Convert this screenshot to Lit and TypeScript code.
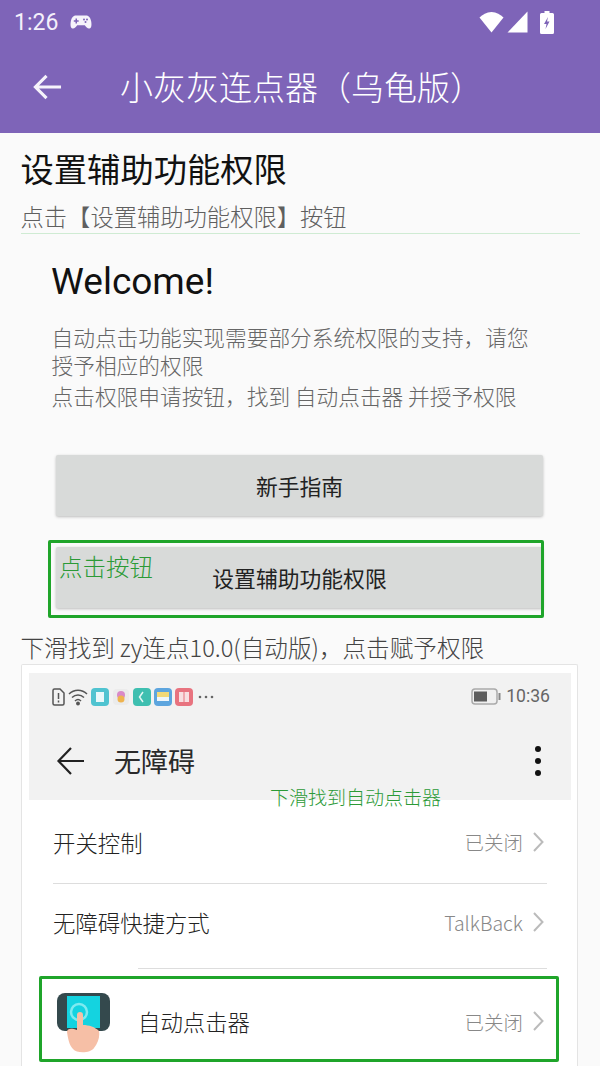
import { LitElement, html, css } from "lit";
import { customElement } from "lit/decorators.js";

@customElement("app-root")
export class AppRoot extends LitElement {
  static styles = css`
    :host { display: block; width: 600px; height: 1066px; overflow: hidden; background: #fafafa;
      font-family: "Noto Sans CJK SC", "Noto Sans", sans-serif; color: #222; }
    * { box-sizing: border-box; }
    .appbar { height: 133px; background: #7e64b8; color: #fff; display: flex; flex-direction: column; }
    .status { height: 44px; display: flex; align-items: center; padding: 0 46px 0 14px; }
    .time { font: 400 23px/1 Roboto, sans-serif; color: #f4f0fb; margin-right: 12px; }
    .spacer { flex: 1; }
    .status svg { display: block; }
    .status .sig { margin: 0 12px 0 3px; }
    .toolbar { height: 89px; display: flex; align-items: center; padding: 0 0 4px 33px; }
    .title { margin-left: 58px; font-size: 33px; font-weight: 300; line-height: 1; color: #fff; white-space: nowrap; }
    .h1 { margin: 14px 0 0 20.500px; font-size: 33.300px; line-height: 42px; font-weight: 400; color: #111; }
    .sub { margin: 11px 20px 0 20.500px; font-size: 23.300px; line-height: 32px; font-weight: 300; color: #5f5f5f;
      height: 34px; border-bottom: 1px solid #cfebd3; white-space: nowrap; }
    .welcome { margin: 24px 0 0 51px; font: 400 37px/48px Roboto, sans-serif; color: #111; }
    .para { margin: 16.500px 60px 0 51.500px; font-size: 21.700px; font-weight: 300; color: #666; line-height: 28px; }
    .para span { display: block; white-space: nowrap; }
    .para .gap { margin-top: 3px; }
    .btn { width: 487px; height: 61px; margin-left: 56px; background: #d8dad9; border-radius: 2px;
      box-shadow: 0 1px 3px rgba(0,0,0,.25); display: flex; align-items: center; justify-content: center;
      font-size: 21.800px; color: #222; font-weight: 400; }
    .first { margin-top: 45.500px; }
    .second { margin-top: 31px; position: relative; }
    .frame { position: absolute; border: 3px solid #1fa52a; border-radius: 2px; pointer-events: none; }
    .second .frame { left: -8px; top: -7px; width: 496px; height: 78px; }
    .note { position: absolute; color: #2b9a36; font-weight: 300; white-space: nowrap; line-height: 1; }
    .second .note { left: 3px; top: 8px; font-size: 23.500px; }
    .scroll { margin: 23px 0 0 20.500px; font-size: 23.600px; line-height: 32px; font-weight: 300; color: #444; white-space: nowrap; }
    .shot { position: relative; margin: 1px 22px 0 21px; height: 410px; background: #fff; border: 1px solid #e4e4e4;
      border-bottom: 0; border-radius: 2px 2px 0 0; padding: 8px 6px 0 7px; }
    .band { height: 127px; background: #f2f2f2; display: flex; flex-direction: column; }
    .band-status { height: 48px; display: flex; align-items: center; padding: 0 21px 0 23px; gap: 3px; }
    .more { margin-left: 2px; }
    .clock { font: 400 17.600px/1 Roboto, sans-serif; color: #666; margin-left: 2px; }
    .band-bar { flex: 1; display: flex; align-items: center; padding: 0 30px 0 27px; }
    .band-title { margin-left: 28px; font-size: 27px; font-weight: 400; color: #2a2a2a; line-height: 1; }
    .band .note { left: 248px; top: 122px; font-size: 19px; }
    .dots { display: flex; flex-direction: column; gap: 6px; }
    .dots i { width: 6px; height: 6px; border-radius: 50%; background: #111; display: block; }
    .row { display: flex; align-items: center; justify-content: space-between; margin: 0 24px;
      font-size: 22.400px; font-weight: 300; color: #222; border-bottom: 1px solid #ddd; }
    .r1 { height: 84px; }
    .r2 { height: 85px; border-bottom: 0; position: relative; padding-bottom: 9px; }
    .r2::after { content: ""; position: absolute; left: 85px; right: 0; bottom: 0; height: 1px; background: #ddd; }
    .val { display: flex; align-items: center; gap: 9px; font-size: 19.500px; color: #888; font-weight: 300; padding-right: 3px; }
    .r3 { height: 92px; border: 0; margin-top: 8px; padding: 0 0 4px 85px; position: relative; }
    .shot .frame { left: 17px; top: 311px; width: 520px; height: 86px; }
    .app-icon { position: absolute; left: 3px; top: 15px; }
  `;

  chevron() {
    return html`<svg width="12" height="20" viewBox="0 0 12 20" fill="none" stroke="#bbb" stroke-width="2"><path d="M2 1l8.500 9-8.500 9"/></svg>`;
  }

  render() {
    return html`
      <header class="appbar">
        <div class="status">
          <span class="time">1:26</span>
          <svg width="22" height="16" viewBox="0 0 22 16"><path fill="#f6f3fb" d="M6 1.500h10c3 0 4.500 2.500 5.200 6 .6 3.500.3 6.500-1.700 7-1.800.4-3.300-1.300-4.700-3.300H7.200C5.800 13.200 4.300 14.900 2.500 14.500.500 14 .2 11 .8 7.500 1.500 4 3 1.500 6 1.500z"/><path fill="#7e64b8" d="M5.500 4.500h1.500v1.700h1.700v1.500H7v1.700H5.500V7.700H3.800V6.200h1.700z"/><circle cx="14" cy="5.500" r="1" fill="#7e64b8"/><circle cx="17" cy="5.500" r="1" fill="#7e64b8"/><circle cx="15.500" cy="8" r="1" fill="#7e64b8"/></svg>
          <span class="spacer"></span>
          <svg width="25" height="22" viewBox="0 0 25 22"><path fill="#fff" d="M12.500 21.500L.5 6.500C3.500 3.500 7.500 1 12.500 1s9 2.500 12 5.500z"/></svg>
          <svg class="sig" width="21" height="22" viewBox="0 0 21 22"><path fill="#fff" d="M.5 21.500L20.500.5v21z"/></svg>
          <svg width="14" height="23" viewBox="0 0 14 23"><path fill="#fff" d="M4.500 0h5v2h3a1.500 1.500 0 0 1 1.500 1.500v18a1.500 1.500 0 0 1-1.500 1.500h-11A1.500 1.500 0 0 1 0 21.500v-18A1.500 1.500 0 0 1 1.500 2h3z"/><path fill="#7e64b8" d="M8 6L4 13h2.500L5.500 18l4-7.500H7z"/></svg>
        </div>
        <div class="toolbar">
          <svg width="29" height="28" viewBox="0 0 30 28" fill="none" stroke="#f6f3fb" stroke-width="3.200"><path d="M29 14H3M14 2.500L2.500 14 14 25.500"/></svg>
          <div class="title">小灰灰连点器（乌龟版）</div>
        </div>
      </header>
      <div class="h1">设置辅助功能权限</div>
      <div class="sub">点击【设置辅助功能权限】按钮</div>
      <div class="welcome">Welcome!</div>
      <div class="para"><span>自动点击功能实现需要部分系统权限的支持，请您</span><span>授予相应的权限</span><span class="gap">点击权限申请按钮，找到 自动点击器 并授予权限</span></div>
      <div class="btn first">新手指南</div>
      <div class="btn second">
        设置辅助功能权限
        <span class="frame"></span>
        <span class="note">点击按钮</span>
      </div>
      <div class="scroll">下滑找到 zy连点10.0(自动版)，点击赋予权限</div>
      <div class="shot">
        <div class="band">
          <div class="band-status">
            <svg width="13" height="18" viewBox="0 0 13 18" fill="none" stroke="#555" stroke-width="1.500"><path d="M1 2.500A1.500 1.500 0 0 1 2.500 1H8l4 4v10.500a1.500 1.500 0 0 1-1.500 1.500h-8A1.500 1.500 0 0 1 1 15.500z"/><path d="M6.500 5v6M6.500 12.500v2"/></svg>
            <svg width="20" height="18" viewBox="0 0 20 18" fill="none" stroke="#555" stroke-width="1.500"><path d="M1 6c5-5 13-5 18 0M4 9.500c3.500-3.500 8.500-3.500 12 0M7 13c2-2 4-2 6 0"/><circle cx="10" cy="15.500" r="1.200" fill="#555"/></svg>
            <svg width="18" height="18" viewBox="0 0 18 18"><rect width="18" height="18" rx="4" fill="#4fc3d0"/><rect x="5" y="4" width="8" height="10" fill="#e8f8fa"/></svg>
            <svg width="18" height="18" viewBox="0 0 18 18"><rect x="1" y="1" width="16" height="16" rx="4" fill="#ebebeb"/><circle cx="9" cy="7" r="4" fill="#d98ac8"/><circle cx="9" cy="11" r="3.500" fill="#efb34f"/></svg>
            <svg width="18" height="18" viewBox="0 0 18 18"><rect width="18" height="18" rx="4" fill="#3fbfb0"/><path d="M10 4L6.500 9l3.500 5" stroke="#e3f7f4" stroke-width="1.500" fill="none"/></svg>
            <svg width="18" height="18" viewBox="0 0 18 18"><rect width="18" height="18" rx="4" fill="#5da5de"/><rect x="3" y="4" width="12" height="5" fill="#f2d978"/><rect x="3" y="9" width="12" height="4" fill="#eef6fc"/></svg>
            <svg width="18" height="18" viewBox="0 0 18 18"><rect width="18" height="18" rx="4" fill="#e8737f"/><rect x="4" y="4" width="10" height="10" fill="#f8dfe1"/><path d="M9 4v10" stroke="#e8737f"/></svg>
            <svg class="more" width="16" height="4" viewBox="0 0 16 4"><circle cx="2" cy="2" r="1.300" fill="#666"/><circle cx="8" cy="2" r="1.300" fill="#666"/><circle cx="14" cy="2" r="1.300" fill="#666"/></svg>
            <span class="spacer"></span>
            <svg width="30" height="18" viewBox="0 0 30 18"><rect x="1" y="1" width="25" height="15" rx="3" fill="#f0f0f0" stroke="#aaa" stroke-width="1.500"/><rect x="3" y="3.500" width="13" height="10" fill="#5d5d5d"/><rect x="27.500" y="5" width="2" height="7" fill="#888"/></svg>
            <span class="clock">10:36</span>
          </div>
          <div class="band-bar">
            <svg width="30" height="30" viewBox="0 0 30 30" fill="none" stroke="#222" stroke-width="2.200"><path d="M28 15H3M15 2L2.500 15 15 28"/></svg>
            <div class="band-title">无障碍</div>
            <span class="spacer"></span>
            <div class="dots"><i></i><i></i><i></i></div>
          </div>
          <span class="note">下滑找到自动点击器</span>
        </div>
        <div class="row r1"><span>开关控制</span><span class="val">已关闭 ${this.chevron()}</span></div>
        <div class="row r2"><span>无障碍快捷方式</span><span class="val">TalkBack ${this.chevron()}</span></div>
        <div class="row r3">
          <svg class="app-icon" width="56" height="62" viewBox="0 0 56 62">
            <rect x="1" y="1" width="53" height="38" rx="8" fill="#34494d"/>
            <rect x="11" y="4" width="33" height="32" fill="#14d3e0"/>
            <circle cx="23" cy="20" r="8" fill="none" stroke="#7feaf0" stroke-width="2.500"/>
            <path fill="#f6bfa6" d="M21 23a3 3 0 0 1 6 0v10c6 0 12 2 16 6 1 6-1 12-5 17-3 5-17 6-21 1-4-4-5-11-6-17 0-4 5-4 10-2z"/>
          </svg>
          <span>自动点击器</span><span class="val">已关闭 ${this.chevron()}</span>
        </div>
        <span class="frame"></span>
      </div>
    `;
  }
}
